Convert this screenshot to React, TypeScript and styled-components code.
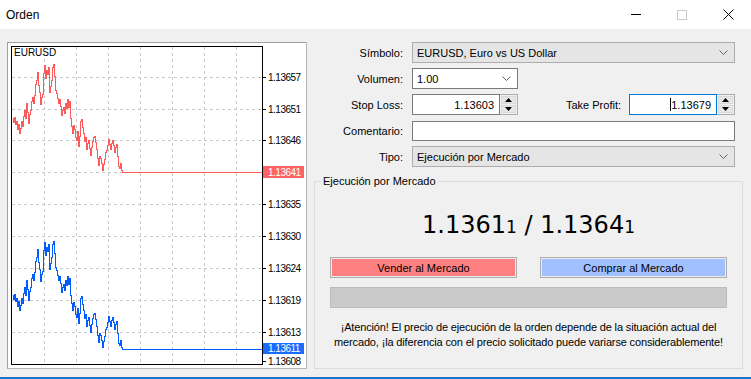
import styled, { createGlobalStyle } from "styled-components";

const GlobalStyle = createGlobalStyle`
  html, body {
    margin: 0;
    padding: 0;
    background: #f0f0f0;
  }
  body {
    font-family: "Liberation Sans", Arial, sans-serif;
    font-size: 11px;
    color: #000;
  }
`;

const Window = styled.div`
  width: 751px;
  height: 379px;
  box-sizing: border-box;
  display: flex;
  flex-direction: column;
  background: #f0f0f0;
  border-bottom: 2px solid #1c74c8;
  overflow: hidden;
`;

const TitleBar = styled.div`
  height: 29px;
  flex-shrink: 0;
  background: #fff;
  display: flex;
  align-items: center;
`;

const Title = styled.div`
  flex: 1;
  padding-left: 6px;
  font-size: 12px;
`;

const CaptionButton = styled.div`
  width: 46px;
  height: 29px;
  display: flex;
  align-items: center;
  justify-content: center;
`;

const Body = styled.div`
  flex: 1;
  display: flex;
  padding: 13px 0 0 7px;
`;

const ChartPanel = styled.div`
  width: 300px;
  height: 327px;
  box-sizing: border-box;
  border: 1px solid #b4b4b4;
  border-top-color: #a0a0a0;
  border-left-color: #a0a0a0;
  background: #fff;
  flex-shrink: 0;
`;

const RightColumn = styled.div`
  width: 429px;
  margin-left: 7px;
  display: flex;
  flex-direction: column;
`;

const FormGrid = styled.div`
  display: grid;
  grid-template-columns: 89px 323px;
  grid-auto-rows: 21px;
  column-gap: 9px;
  row-gap: 5px;
`;

const Label = styled.div`
  text-align: right;
  align-self: center;
  white-space: nowrap;
`;

const Select = styled.div<{ $light?: boolean; $width?: number }>`
  box-sizing: border-box;
  width: ${(p) => (p.$width ? `${p.$width}px` : "100%")};
  height: 21px;
  display: flex;
  align-items: center;
  padding: 0 6px 0 4px;
  border: 1px solid ${(p) => (p.$light ? "#7a7a7a" : "#adadad")};
  background: ${(p) => (p.$light ? "#fff" : "#e5e5e5")};
`;

const SelectText = styled.span`
  flex: 1;
  white-space: nowrap;
`;

const TextField = styled.div`
  box-sizing: border-box;
  width: 100%;
  height: 20px;
  align-self: center;
  border: 1px solid #7a7a7a;
  background: #fff;
`;

const StopRow = styled.div`
  display: flex;
  align-items: stretch;
`;

const SpinField = styled.div`
  width: 106px;
  display: flex;
  flex-shrink: 0;
`;

const SpinInput = styled.div<{ $focused?: boolean }>`
  flex: 1;
  box-sizing: border-box;
  border: 1px solid ${(p) => (p.$focused ? "#0078d7" : "#7a7a7a")};
  background: #fff;
  display: flex;
  align-items: center;
  justify-content: flex-end;
  padding-right: 5px;
`;

const Caret = styled.span`
  width: 1px;
  height: 13px;
  background: #000;
`;

const Spinner = styled.div`
  width: 18px;
  box-sizing: border-box;
  border: 1px solid #adadad;
  border-left: none;
  display: flex;
  flex-direction: column;
  background: #f0f0f0;
`;

const SpinButton = styled.div`
  flex: 1;
  display: flex;
  align-items: center;
  justify-content: center;
  border: 1px solid #dadada;
  margin: 1px 1px 0 1px;
  background: #e6e6e6;
  &:last-child {
    margin-bottom: 1px;
  }
`;

const ProfitLabel = styled.div`
  width: 103px;
  margin-right: 8px;
  text-align: right;
  align-self: center;
  white-space: nowrap;
`;

const GroupBox = styled.div`
  position: relative;
  margin-top: 14px;
  height: 188px;
  box-sizing: border-box;
  border: 1px solid #dcdcdc;
  display: flex;
  flex-direction: column;
  align-items: center;
  padding: 0 15px;
`;

const GroupCaption = styled.div`
  position: absolute;
  top: -7px;
  left: 6px;
  padding: 0 2px;
  background: #f0f0f0;
  line-height: 13px;
`;

const PriceLine = styled.div`
  margin-top: 28px;
  height: 30px;
  line-height: 30px;
  font-family: "DejaVu Sans", sans-serif;
  font-size: 24px;
  white-space: nowrap;
`;

const SmallDigit = styled.span`
  font-size: 17px;
`;

const ButtonRow = styled.div`
  margin-top: 17px;
  width: 100%;
  display: flex;
  justify-content: space-between;
`;

const MarketButton = styled.div<{ $tone: "sell" | "buy" }>`
  width: 187px;
  height: 21px;
  box-sizing: border-box;
  border: 1px solid #adadad;
  box-shadow: inset 0 0 0 1px #ececec;
  background: ${(p) => (p.$tone === "sell" ? "#ff8080" : "#a0c0ff")};
  display: flex;
  align-items: center;
  justify-content: center;
  padding-top: 1px;
`;

const ProgressBar = styled.div`
  margin-top: 9px;
  width: 100%;
  height: 21px;
  box-sizing: border-box;
  border: 1px solid #bcbcbc;
  background: #cacaca;
`;

const Notice = styled.div`
  margin-top: 12px;
  text-align: center;
  line-height: 15px;
  letter-spacing: -0.15px;
`;

const Chevron = () => (
  <svg width="9" height="5" viewBox="0 0 9 5">
    <polyline points="0.5,0.5 4.5,4.5 8.5,0.5" fill="none" stroke="#606060" strokeWidth="1" />
  </svg>
);

const Arrow = ({ up }: { up?: boolean }) => (
  <svg width="7" height="4" viewBox="0 0 7 4">
    <polygon points={up ? "3.5,0 7,4 0,4" : "0,0 7,0 3.5,4"} fill="#000" />
  </svg>
);

// red series of the ask chart; the bid chart is the same shape 177px lower
const series: [number, number][] = [
  [12, 118], [13, 122], [14, 117], [15, 124], [16, 121], [17, 129], [18, 124], [19, 133],
  [20, 128], [21, 121], [22, 126], [23, 116], [24, 110], [25, 118], [26, 103], [27, 112],
  [28, 123], [29, 114], [30, 110], [31, 101], [32, 97], [33, 103], [34, 95], [35, 84],
  [36, 80], [37, 72], [38, 85], [39, 92], [40, 104], [41, 97], [42, 94], [43, 73],
  [44, 65], [45, 78], [46, 70], [47, 74], [48, 67], [49, 92], [50, 86], [51, 80],
  [52, 67], [53, 64], [54, 76], [55, 90], [56, 93], [57, 98], [58, 103], [59, 99],
  [60, 106], [61, 115], [62, 110], [63, 107], [64, 113], [65, 103], [66, 108], [67, 99],
  [68, 107], [69, 101], [70, 118], [71, 126], [72, 133], [73, 125], [74, 129], [75, 137],
  [76, 140], [77, 131], [78, 146], [79, 136], [80, 121], [81, 119], [82, 127], [83, 133],
  [84, 141], [85, 137], [86, 149], [87, 143], [88, 140], [89, 148], [90, 155], [91, 147],
  [92, 141], [93, 137], [94, 136], [95, 142], [96, 149], [97, 158], [98, 165], [99, 156],
  [100, 158], [101, 163], [102, 170], [103, 164], [104, 159], [105, 152], [106, 150], [107, 145],
  [108, 139], [109, 144], [110, 149], [111, 143], [112, 140], [113, 145], [114, 152], [115, 147],
  [116, 144], [117, 156], [118, 166], [119, 168], [120, 163], [121, 170], [122, 172], [262, 172],
];

const stepPath = (dy: number) =>
  series
    .map(([x, y], i) =>
      i === 0 ? `M${x + 0.5} ${y + dy + 0.5}` : `H${x + 0.5} V${y + dy + 0.5}`
    )
    .join(" ");

const gridX = [44, 76, 108, 140, 172, 204, 236];
const gridY = [77, 109, 140, 172, 204, 236, 268, 300, 332];
const priceLabels: [number, string][] = [
  [77, "1.13657"], [109, "1.13651"], [140, "1.13646"], [204, "1.13635"], [236, "1.13630"],
  [268, "1.13624"], [300, "1.13619"], [332, "1.13613"], [361, "1.13608"],
];

const Chart = () => (
  <svg width="298" height="325" viewBox="8 43 298 325" style={{ display: "block" }}>
    <g stroke="#c8c8c8" strokeDasharray="3 3" strokeWidth="1" shapeRendering="crispEdges">
      {gridX.map((x) => (
        <line key={`v${x}`} x1={x + 0.5} y1={47} x2={x + 0.5} y2={365} />
      ))}
      {gridY.map((y) => (
        <line key={`h${y}`} x1={12} y1={y + 0.5} x2={262} y2={y + 0.5} />
      ))}
    </g>
    <path d={stepPath(0)} fill="none" stroke="#ff5a5a" strokeWidth="1" shapeRendering="crispEdges" />
    <path d={stepPath(177)} fill="none" stroke="#005cff" strokeWidth="1" shapeRendering="crispEdges" />
    <rect x={11.5} y={46.5} width={251} height={318} fill="none" stroke="#000" shapeRendering="crispEdges" />
    <g stroke="#000" shapeRendering="crispEdges">
      {[...gridY, 361].map((y) => (
        <line key={`t${y}`} x1={262} y1={y + 0.5} x2={266} y2={y + 0.5} />
      ))}
    </g>
    <text x={14} y={56} fontFamily="Liberation Sans, Arial, sans-serif" fontSize="10">
      EURUSD
    </text>
    <g fontFamily="Liberation Sans, Arial, sans-serif" fontSize="10" letterSpacing="-0.5">
      {priceLabels.map(([y, t]) => (
        <text key={t} x={268} y={y + 4}>
          {t}
        </text>
      ))}
      <rect x={263} y={166} width={41} height={12} fill="#ff6464" />
      <text x={268} y={176} fill="#fff">1.13641</text>
      <rect x={263} y={343} width={41} height={11} fill="#1a6cff" />
      <text x={268} y={352} fill="#fff">1.13611</text>
    </g>
  </svg>
);

export default function App() {
  return (
    <>
      <GlobalStyle />
      <Window>
        <TitleBar>
          <Title>Orden</Title>
          <CaptionButton>
            <svg width="10" height="1">
              <rect width="10" height="1" fill="#000" />
            </svg>
          </CaptionButton>
          <CaptionButton>
            <svg width="10" height="10">
              <rect x="0.5" y="0.5" width="9" height="9" fill="none" stroke="#cccccc" />
            </svg>
          </CaptionButton>
          <CaptionButton>
            <svg width="11" height="11">
              <path d="M0.5 0.5 L10.5 10.5 M10.5 0.5 L0.5 10.5" stroke="#000" strokeWidth="1" />
            </svg>
          </CaptionButton>
        </TitleBar>
        <Body>
          <ChartPanel>
            <Chart />
          </ChartPanel>
          <RightColumn>
            <FormGrid>
              <Label>Símbolo:</Label>
              <Select>
                <SelectText>EURUSD, Euro vs US Dollar</SelectText>
                <Chevron />
              </Select>
              <Label>Volumen:</Label>
              <Select $light $width={106}>
                <SelectText>1.00</SelectText>
                <Chevron />
              </Select>
              <Label>Stop Loss:</Label>
              <StopRow>
                <SpinField>
                  <SpinInput>1.13603</SpinInput>
                  <Spinner>
                    <SpinButton>
                      <Arrow up />
                    </SpinButton>
                    <SpinButton>
                      <Arrow />
                    </SpinButton>
                  </Spinner>
                </SpinField>
                <ProfitLabel>Take Profit:</ProfitLabel>
                <SpinField>
                  <SpinInput $focused>
                    <Caret />
                    1.13679
                  </SpinInput>
                  <Spinner>
                    <SpinButton>
                      <Arrow up />
                    </SpinButton>
                    <SpinButton>
                      <Arrow />
                    </SpinButton>
                  </Spinner>
                </SpinField>
              </StopRow>
              <Label>Comentario:</Label>
              <TextField />
              <Label>Tipo:</Label>
              <Select>
                <SelectText>Ejecución por Mercado</SelectText>
                <Chevron />
              </Select>
            </FormGrid>
            <GroupBox>
              <GroupCaption>Ejecución por Mercado</GroupCaption>
              <PriceLine>
                1.1361<SmallDigit>1</SmallDigit> / 1.1364<SmallDigit>1</SmallDigit>
              </PriceLine>
              <ButtonRow>
                <MarketButton $tone="sell">Vender al Mercado</MarketButton>
                <MarketButton $tone="buy">Comprar al Mercado</MarketButton>
              </ButtonRow>
              <ProgressBar />
              <Notice>
                ¡Atención! El precio de ejecución de la orden depende de la situación actual del
                <br />
                mercado, ¡la diferencia con el precio solicitado puede variarse considerablemente!
              </Notice>
            </GroupBox>
          </RightColumn>
        </Body>
      </Window>
    </>
  );
}
